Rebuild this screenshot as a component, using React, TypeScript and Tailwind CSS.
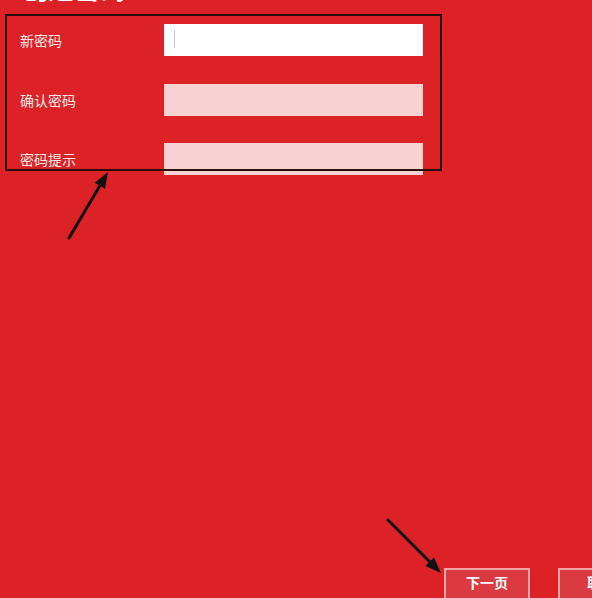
import { type ReactNode } from "react"

const FONT = { fontFamily: '"Noto Sans CJK SC", "Noto Sans", sans-serif' }

function Field({ label, active, children }: { label: string; active?: boolean; children?: ReactNode }) {
  return (
    <div className="flex items-center h-[32px]">
      <div className="w-[144px] text-[14px] text-[#fbe9e9]">{label}</div>
      <div
        className={
          "relative w-[259px] h-[32px] " + (active ? "bg-white" : "bg-[#f7d2d3]")
        }
      >
        {children}
      </div>
    </div>
  )
}

// annotation arrow, drawn over the page
function Arrow({ x1, y1, x2, y2 }: { x1: number; y1: number; x2: number; y2: number }) {
  const a = Math.atan2(y2 - y1, x2 - x1)
  const len = 16
  const w = 6
  const bx = x2 - Math.cos(a) * len
  const by = y2 - Math.sin(a) * len
  const px = -Math.sin(a) * w
  const py = Math.cos(a) * w
  return (
    <g>
      <line x1={x1} y1={y1} x2={bx} y2={by} stroke="#111" strokeWidth={3} strokeLinecap="round" />
      <polygon points={`${x2},${y2} ${bx + px},${by + py} ${bx - px},${by - py}`} fill="#111" />
    </g>
  )
}

export default function App() {
  return (
    <div className="relative w-[592px] h-[598px] overflow-hidden bg-[#dc2127] flex flex-col" style={FONT}>
      <div className="pl-[22px] mt-[-29px] h-[34px] text-[26px] leading-[34px] font-bold text-white">创建密码</div>

      <div className="flex flex-col gap-[28px] pl-[20px] mt-[19px]">
        <Field label="新密码" active>
          <div className="absolute left-[10px] top-[6px] w-px h-[18px] bg-[#c8c8c8]" />
        </Field>
        <Field label="确认密码" />
        <div className="-mt-px">
          <Field label="密码提示" />
        </div>
      </div>

      <div className="mt-auto mb-[-2px] flex gap-[28px] pl-[444px]">
        <button className="w-[86px] h-[32px] shrink-0 border-2 border-[#f1a5a7] bg-[#db3b40] pb-[4px] text-[14px] font-bold text-white">
          下一页
        </button>
        <button className="w-[86px] h-[32px] shrink-0 border-2 border-[#f1a5a7] bg-[#db3b40] pb-[4px] text-[14px] font-bold text-white">
          取消
        </button>
      </div>

      {/* annotation box + arrows */}
      <div className="absolute left-[5px] top-[14px] w-[437px] h-[157px] border-2 border-[#2a0c0c]" />
      <svg className="absolute inset-0 pointer-events-none" width={592} height={598}>
        <Arrow x1={69} y1={238} x2={108} y2={172} />
        <Arrow x1={388} y1={520} x2={441} y2={573} />
      </svg>
    </div>
  )
}
